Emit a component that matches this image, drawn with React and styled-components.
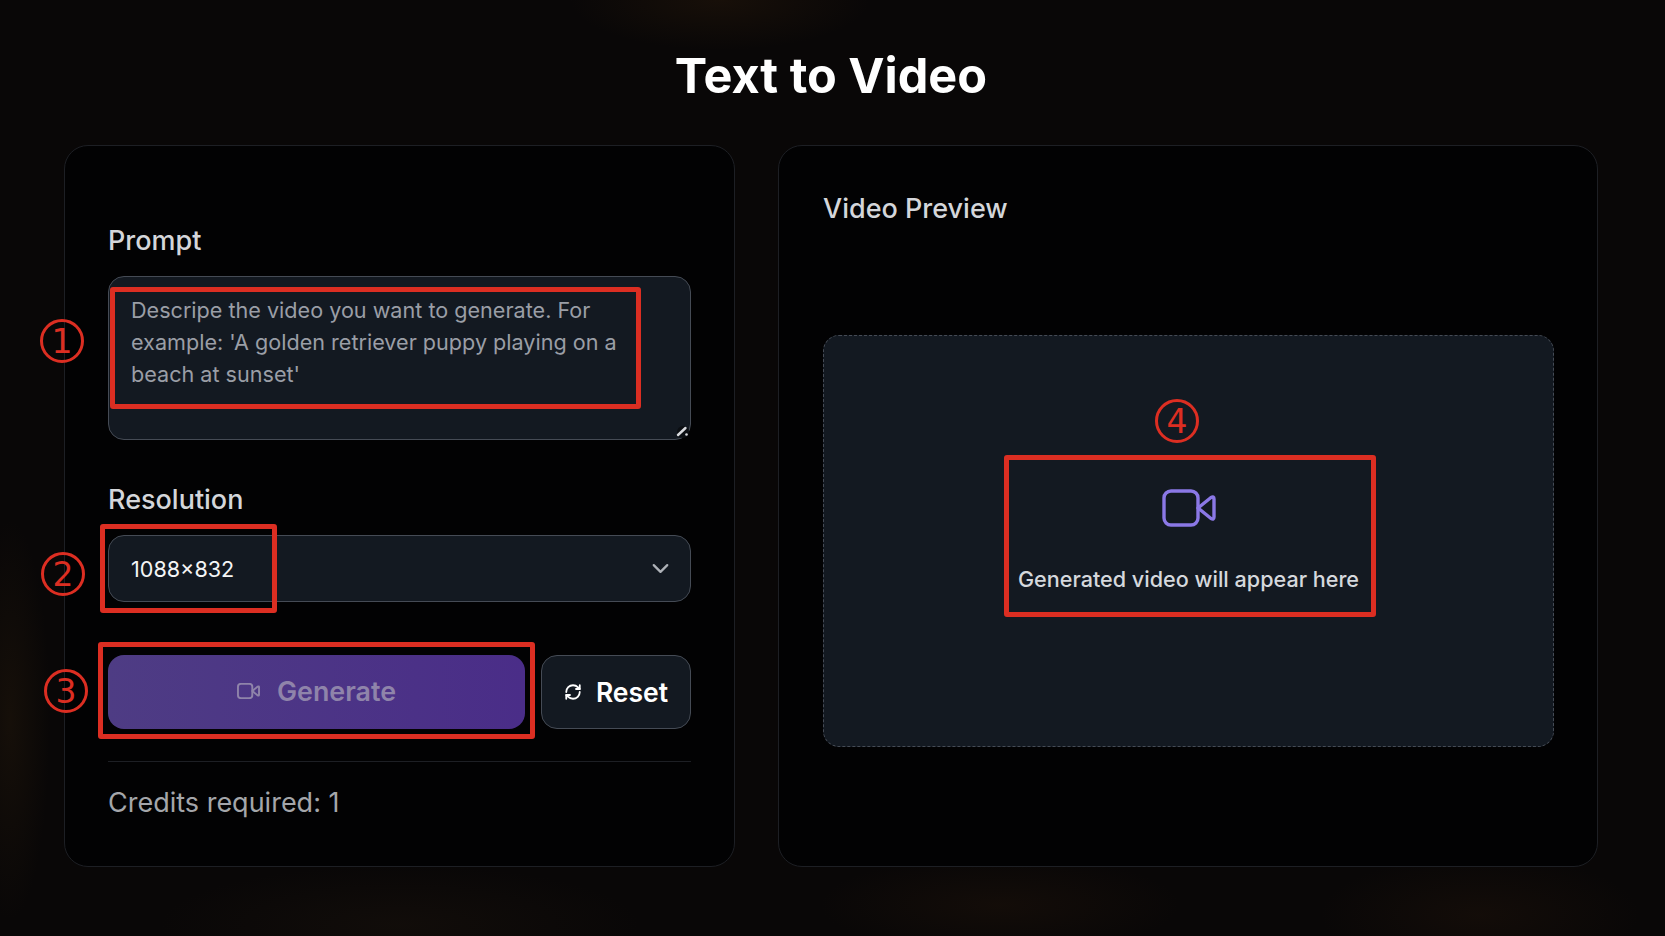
import React from "react";
import styled, { createGlobalStyle } from "styled-components";
import { RefreshCw, ChevronDown } from "lucide-react";

const Global = createGlobalStyle`
  html, body { margin: 0; padding: 0; background: #080606; }
  * { box-sizing: border-box; }
  body { font-family: Inter, "Liberation Sans", sans-serif; }
`;

const Page = styled.div`
  position: relative;
  width: 100%;
  height: 936px;
  overflow: hidden;
  padding: 47px 67px 0 64px;
  background:
    radial-gradient(ellipse 150px 50px at 720px 0px, rgba(75, 45, 15, 0.22), transparent 100%),
    radial-gradient(ellipse 180px 50px at 1000px 905px, rgba(60, 35, 15, 0.2), transparent 100%),
    radial-gradient(ellipse 160px 60px at 1480px 915px, rgba(60, 35, 15, 0.2), transparent 100%),
    radial-gradient(ellipse 40px 200px at 10px 720px, rgba(60, 40, 15, 0.25), transparent 100%),
    radial-gradient(ellipse 240px 60px at 400px 925px, rgba(50, 35, 20, 0.2), transparent 100%),
    #090707;
`;

const Title = styled.h1`
  margin: 0 0 40px;
  text-align: center;
  font-size: 48.6px;
  line-height: 58px;
  font-weight: 700;
  color: #ffffff;
`;

const Columns = styled.div`
  display: grid;
  grid-template-columns: 671px 820px;
  gap: 43px;
`;

const Panel = styled.section`
  height: 722px;
  background: #020203;
  border: 1px solid #1d1f24;
  border-radius: 24px;
`;

const FormPanel = styled(Panel)`
  padding: 77px 43px 0;
`;

const PreviewPanel = styled(Panel)`
  padding: 45px 43px 0 44px;
`;

const Label = styled.label`
  display: block;
  font-size: 27px;
  line-height: 36px;
  font-weight: 500;
  color: #d4d6da;
`;

const PromptField = styled.div`
  position: relative;
  margin: 17px 0 42px;
`;

const Prompt = styled.textarea`
  display: block;
  width: 100%;
  height: 164px;
  padding: 17px 22px;
  background: #131921;
  border: 1px solid #454b55;
  border-radius: 16px;
  outline: none;
  resize: none;
  font: 400 21.6px/32px Inter, "Liberation Sans", sans-serif;
  color: #d0d3d8;
  &::placeholder { color: #9a9ea6; opacity: 1; }
`;

const ResizeHandle = styled.svg`
  position: absolute;
  right: 2px;
  bottom: 2px;
  width: 16px;
  height: 16px;
  pointer-events: none;
`;

const SelectWrap = styled.div`
  position: relative;
  margin: 17px 0 53px;
  color: #aeb2b8;
`;

const Select = styled.select`
  display: block;
  width: 100%;
  height: 67px;
  padding: 0 22px;
  appearance: none;
  background: #131921;
  border: 1px solid #454b55;
  border-radius: 16px;
  font: 400 21.6px Inter, "Liberation Sans", sans-serif;
  color: #f4f5f6;
`;

const Chevron = styled(ChevronDown)`
  position: absolute;
  right: 17px;
  top: 20px;
  pointer-events: none;
`;

const Actions = styled.div`
  display: flex;
  gap: 16px;
  height: 74px;
`;

const GenerateButton = styled.button`
  flex: 1;
  display: flex;
  align-items: center;
  justify-content: center;
  gap: 17px;
  padding-bottom: 3px;
  border: none;
  border-radius: 16px;
  background: linear-gradient(90deg, #4e3c84, #4a2d88);
  color: #8f84aa;
  font: 600 26.8px Inter, "Liberation Sans", sans-serif;
`;

const ResetButton = styled.button`
  width: 150px;
  display: flex;
  align-items: center;
  justify-content: center;
  gap: 14px;
  background: #131921;
  border: 1px solid #454b55;
  border-radius: 16px;
  color: #ffffff;
  font: 600 26.5px Inter, "Liberation Sans", sans-serif;
`;

const Footer = styled.div`
  margin-top: 32px;
  padding-top: 23px;
  border-top: 1px solid #1d1f24;
  font-size: 27px;
  line-height: 36px;
  color: #a4a6aa;
`;

const PreviewBox = styled.div`
  height: 412px;
  margin-top: 108px;
  display: flex;
  flex-direction: column;
  align-items: center;
  justify-content: center;
  gap: 37px;
  background: #131921;
  border: 1px dashed #454b55;
  border-radius: 16px;
  color: #8b78e6;
`;

const PreviewText = styled.p`
  margin: 0;
  font-size: 21.6px;
  line-height: 30px;
  font-weight: 500;
  color: #d5d8dd;
`;

const Mark = styled.div`
  position: absolute;
  left: ${(p) => p.$x}px;
  top: ${(p) => p.$y}px;
  width: ${(p) => p.$w}px;
  height: ${(p) => p.$h}px;
  border: 5px solid #dc2e22;
  border-radius: 3px;
  pointer-events: none;
`;

const Badge = styled.div`
  position: absolute;
  left: ${(p) => p.$x}px;
  top: ${(p) => p.$y}px;
  width: 44px;
  height: 44px;
  display: flex;
  align-items: center;
  justify-content: center;
  border: 3px solid #dc2e22;
  border-radius: 50%;
  font: 400 33px "DejaVu Sans", sans-serif;
  color: #dc2e22;
`;

/* Camera with a near-square body and a small wedge lens */
function CameraIcon({ width, height, stroke }) {
  return (
    <svg width={width} height={height} viewBox="0 0 54 38" fill="none" stroke="currentColor" strokeWidth={stroke} strokeLinejoin="round" strokeLinecap="round">
      <rect x="2" y="2" width="34" height="34" rx="7" />
      <path d="M36 19 L49 8.5 Q52 7 52 10 V28 Q52 31 49 29.5 Z" />
    </svg>
  );
}

export default function App() {
  return (
    <Page>
      <Global />
      <Title>Text to Video</Title>
      <Columns>
        <FormPanel>
          <Label>Prompt</Label>
          <PromptField>
            <Prompt placeholder="Descripe the video you want to generate. For example: 'A golden retriever puppy playing on a beach at sunset'" />
            <ResizeHandle viewBox="0 0 16 16">
              <circle cx="10" cy="10" r="6" fill="#0b0e12" />
              <path d="M5 13 L12.5 6" stroke="#d8dade" strokeWidth="2.4" strokeLinecap="round" />
              <circle cx="13.5" cy="12.5" r="1.3" fill="#d8dade" />
            </ResizeHandle>
          </PromptField>
          <Label>Resolution</Label>
          <SelectWrap>
            <Select defaultValue="1088x832">
              <option value="1088x832">1088×832</option>
            </Select>
            <Chevron size={27} strokeWidth={2} />
          </SelectWrap>
          <Actions>
            <GenerateButton disabled>
              <CameraIcon width={23} height={16} stroke={4.5} />
              Generate
            </GenerateButton>
            <ResetButton>
              <RefreshCw size={18} strokeWidth={2.4} />
              Reset
            </ResetButton>
          </Actions>
          <Footer>Credits required: 1</Footer>
        </FormPanel>
        <PreviewPanel>
          <Label>Video Preview</Label>
          <PreviewBox>
            <CameraIcon width={54} height={38} stroke={3.4} />
            <PreviewText>Generated video will appear here</PreviewText>
          </PreviewBox>
        </PreviewPanel>
      </Columns>

      <Mark $x={110} $y={287} $w={531} $h={122} />
      <Mark $x={100} $y={524} $w={177} $h={89} />
      <Mark $x={98} $y={642} $w={437} $h={97} />
      <Mark $x={1004} $y={455} $w={372} $h={162} />

      <Badge $x={40} $y={319}>1</Badge>
      <Badge $x={41} $y={552}>2</Badge>
      <Badge $x={44} $y={669}>3</Badge>
      <Badge $x={1155} $y={399}>4</Badge>
    </Page>
  );
}
